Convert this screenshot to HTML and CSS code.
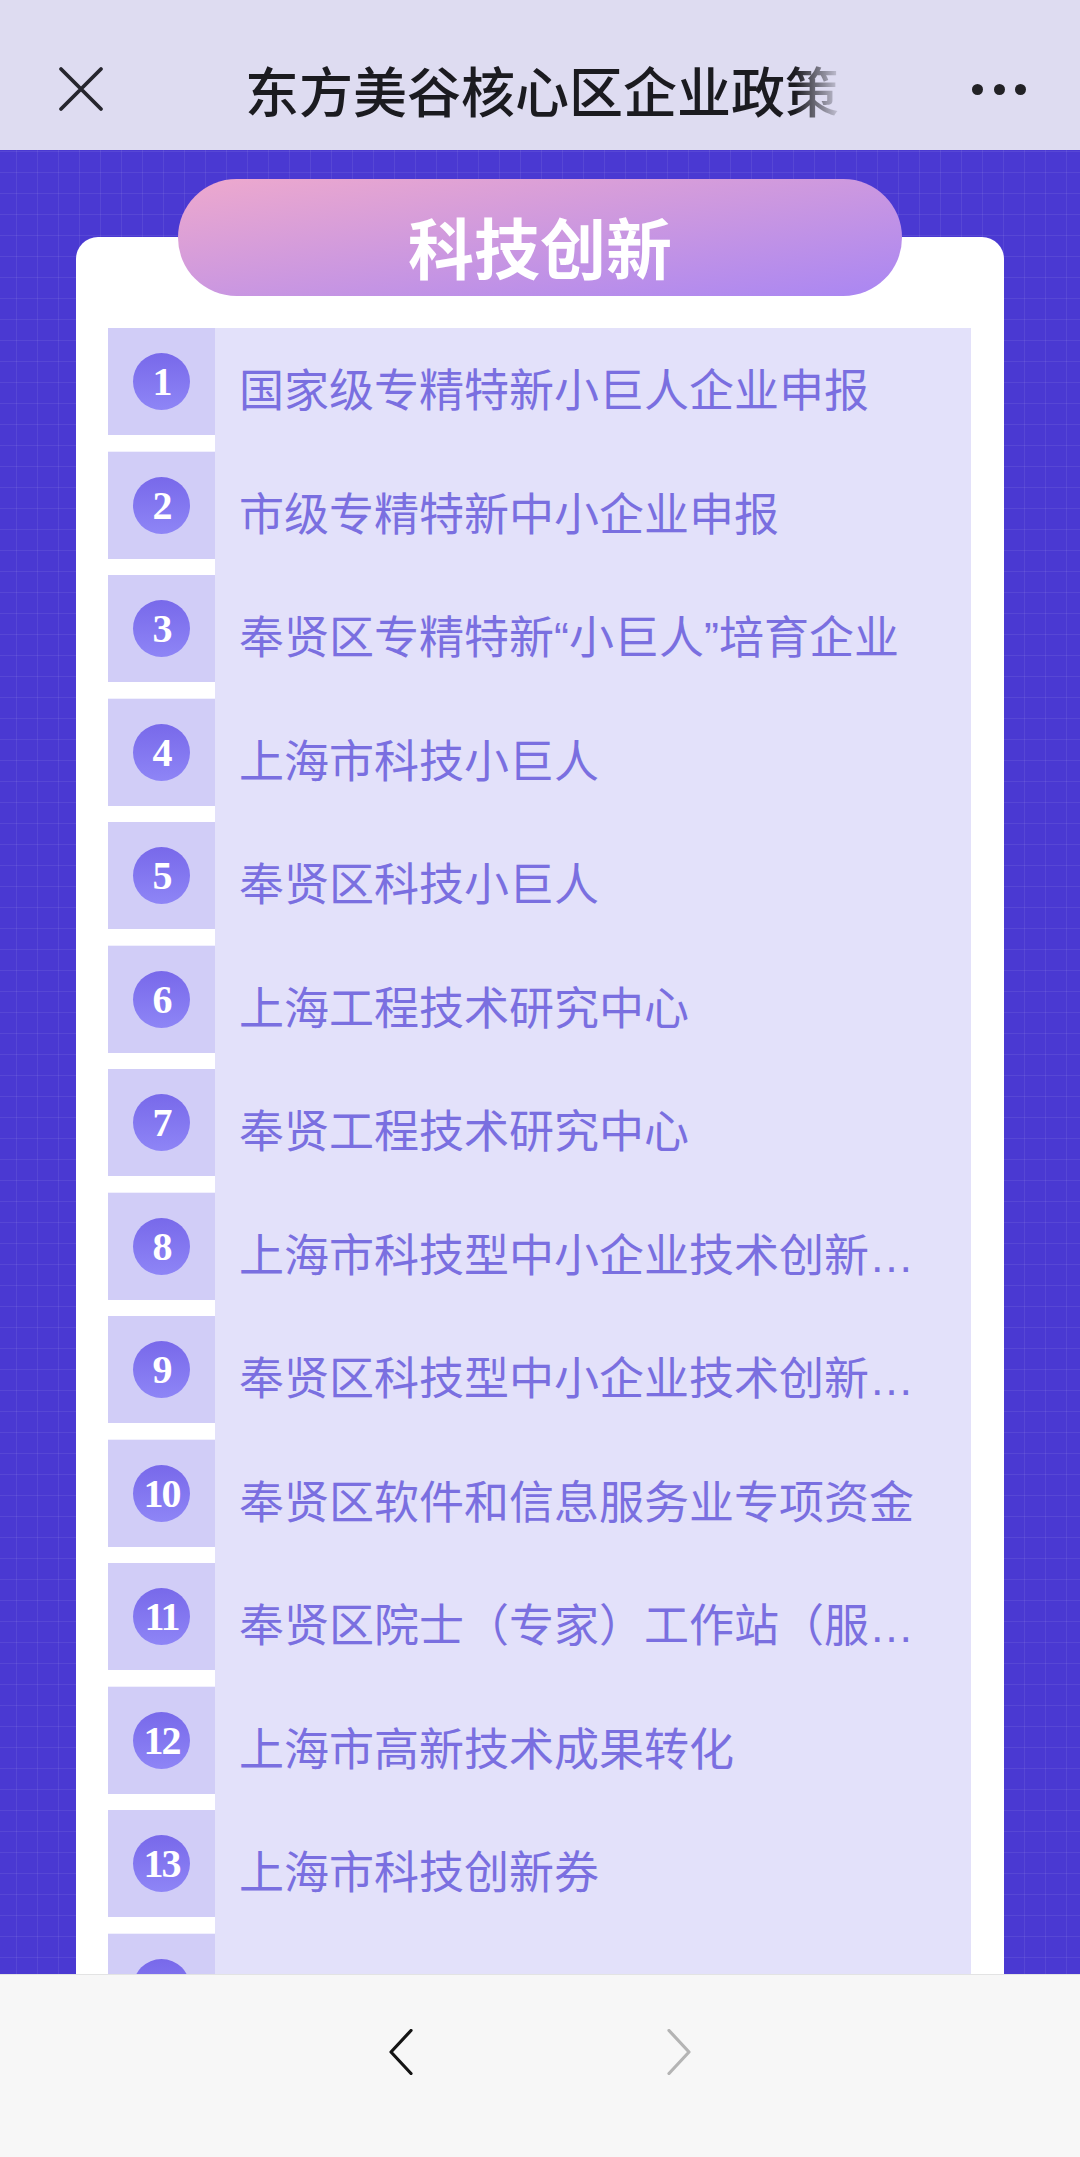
FILE: index.html
```html
<!DOCTYPE html>
<html lang="zh-CN">
<head>
    <meta charset="UTF-8">
    <meta name="viewport" content="width=device-width, initial-scale=1.0">
    <title>东方美谷核心区企业政策</title>
    <link rel="stylesheet" href="styles.css">
</head>
<body>
    <header class="topbar">
        <button class="icon-btn close" aria-label="关闭">
            <svg width="46" height="46" viewBox="0 0 46 46">
                <path d="M3 3 L43 43 M43 3 L3 43" stroke="#26262e" stroke-width="3.8" stroke-linecap="round" fill="none"/>
            </svg>
        </button>
        <h1 class="title">东方美谷核心区企业政策</h1>
        <button class="icon-btn more" aria-label="更多">
            <span></span><span></span><span></span>
        </button>
    </header>

    <main class="page">
        <section class="panel">
            <div class="panel-title">科技创新</div>
            <div class="panel-card">
                <ul class="policy-list">
                    <li class="policy-item"><span class="num"><i>1</i></span><span class="name">国家级专精特新小巨人企业申报</span></li>
                    <li class="policy-item"><span class="num"><i>2</i></span><span class="name">市级专精特新中小企业申报</span></li>
                    <li class="policy-item"><span class="num"><i>3</i></span><span class="name">奉贤区专精特新“小巨人”培育企业</span></li>
                    <li class="policy-item"><span class="num"><i>4</i></span><span class="name">上海市科技小巨人</span></li>
                    <li class="policy-item"><span class="num"><i>5</i></span><span class="name">奉贤区科技小巨人</span></li>
                    <li class="policy-item"><span class="num"><i>6</i></span><span class="name">上海工程技术研究中心</span></li>
                    <li class="policy-item"><span class="num"><i>7</i></span><span class="name">奉贤工程技术研究中心</span></li>
                    <li class="policy-item"><span class="num"><i>8</i></span><span class="name">上海市科技型中小企业技术创新资金</span></li>
                    <li class="policy-item"><span class="num"><i>9</i></span><span class="name">奉贤区科技型中小企业技术创新资金</span></li>
                    <li class="policy-item"><span class="num"><i>10</i></span><span class="name">奉贤区软件和信息服务业专项资金</span></li>
                    <li class="policy-item"><span class="num"><i>11</i></span><span class="name">奉贤区院士（专家）工作站（服务中心）</span></li>
                    <li class="policy-item"><span class="num"><i>12</i></span><span class="name">上海市高新技术成果转化</span></li>
                    <li class="policy-item"><span class="num"><i>13</i></span><span class="name">上海市科技创新券</span></li>
                    <li class="policy-item"><span class="num"><i>14</i></span></li>
                </ul>
            </div>
        </section>
    </main>

    <footer class="navbar">
        <button class="icon-btn arrow" aria-label="后退">
            <svg width="24" height="46" viewBox="0 0 24 46">
                <path d="M22 1.5 L2 23 L22 44.5" stroke="#141414" stroke-width="3.2" stroke-linecap="round" stroke-linejoin="round" fill="none"/>
            </svg>
        </button>
        <button class="icon-btn arrow" aria-label="前进">
            <svg width="24" height="46" viewBox="0 0 24 46">
                <path d="M2 1.5 L22 23 L2 44.5" stroke="#b4b4b4" stroke-width="3.2" stroke-linecap="round" stroke-linejoin="round" fill="none"/>
            </svg>
        </button>
    </footer>
</body>
</html>
```

FILE: styles.css
```css
body {
    margin: 0;
    height: 100vh;
    display: flex;
    flex-direction: column;
    overflow: hidden;
    font-family: "Liberation Sans", "Noto Sans CJK SC", sans-serif;
}

.icon-btn {
    background: none;
    border: none;
    padding: 0;
    cursor: pointer;
    display: flex;
    align-items: center;
}

/* top bar */
.topbar {
    flex-shrink: 0;
    height: 150px;
    box-sizing: border-box;
    padding-top: 28px;
    display: flex;
    align-items: center;
    background: #dedcf1;
}

.close {
    margin-left: 58px;
    width: 46px;
    height: 46px;
}

.title {
    margin: 0 0 0 141px;
    width: 600px;
    font-size: 54px;
    font-weight: 500;
    color: #1b1b20;
    white-space: nowrap;
    overflow: hidden;
    -webkit-mask-image: linear-gradient(to right, #000 calc(100% - 50px), transparent);
    mask-image: linear-gradient(to right, #000 calc(100% - 50px), transparent);
}

.more {
    margin-left: auto;
    margin-right: 54px;
    gap: 10.5px;
}

.more span {
    width: 11px;
    height: 11px;
    border-radius: 50%;
    background: #222226;
}

/* content */
.page {
    flex: 1;
    overflow: hidden;
    background-color: #4a39d2;
    background-image:
        linear-gradient(rgba(255, 255, 255, 0.07) 1px, transparent 1px),
        linear-gradient(90deg, rgba(255, 255, 255, 0.07) 1px, transparent 1px);
    background-size: 21px 21px;
    background-position: 16px 1px;
}

.panel {
    margin: 29px 76px 0;
}

.panel-title {
    position: relative;
    z-index: 1;
    width: 724px;
    height: 117px;
    margin: 0 auto;
    box-sizing: border-box;
    padding-top: 14px;
    border-radius: 59px;
    background: linear-gradient(to bottom right, #eea9cd, #a986f3);
    color: #fff;
    font-size: 66px;
    font-weight: 700;
    display: flex;
    align-items: center;
    justify-content: center;
}

.panel-card {
    margin-top: -59px;
    padding: 91px 33px 0 32px;
    background: #fff;
    border-radius: 22px 22px 0 0;
}

.policy-list {
    margin: 0;
    padding: 0;
    list-style: none;
}

.policy-item {
    display: flex;
    height: 123.5px;
    background: #e3e1fa;
}

.num {
    flex-shrink: 0;
    width: 107px;
    height: 107px;
    background: #d1cdf7;
    display: flex;
    align-items: center;
    justify-content: center;
    box-shadow: 0 16.5px 0 #fff;
}

.num i {
    width: 57px;
    height: 57px;
    border-radius: 50%;
    background: linear-gradient(to bottom, #7869ea, #8e85f6);
    color: #fff;
    font-family: "Liberation Serif", serif;
    font-style: normal;
    font-weight: 700;
    font-size: 40px;
    letter-spacing: -2px;
    display: flex;
    align-items: center;
    justify-content: center;
}

.name {
    flex: 1;
    min-width: 0;
    padding: 0 40px 0 24px;
    color: #7a6fe0;
    font-size: 45px;
    line-height: 128px;
    white-space: nowrap;
    overflow: hidden;
    text-overflow: ellipsis;
}

/* bottom bar */
.navbar {
    flex-shrink: 0;
    height: 183px;
    box-sizing: border-box;
    padding-top: 54px;
    display: flex;
    justify-content: center;
    align-items: flex-start;
    gap: 254px;
    background: #f7f7f7;
    border-top: 1px solid #e3e3e3;
}
```
